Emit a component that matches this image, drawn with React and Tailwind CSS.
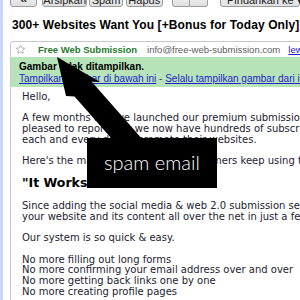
export default function App() {
  return (
    <div className="relative w-[300px] h-[300px] overflow-hidden bg-white flex">
      <div className="w-[3px] shrink-0 bg-[#c9d6f5]" />
      <div className="flex-1 min-w-0 flex flex-col font-['Liberation_Sans',Arial,sans-serif]">
        {/* toolbar */}
        <div className="h-[8px] flex items-start pl-[7px] whitespace-nowrap overflow-visible">
          <div className="w-[30px] h-[21px] -mt-[14px] border border-[#9c9c9c] rounded-[3px] bg-linear-to-b from-[#ffffff] to-[#e0e0e0] flex justify-center pt-[6px] text-[13px] leading-[11px] font-bold text-[#333]">«</div>
          <div className="ml-[5px] w-[50px] h-[21px] -mt-[14px] border border-[#9c9c9c] rounded-[3px] bg-linear-to-b from-[#ffffff] to-[#e0e0e0] flex justify-center pt-[8px] text-[11px] leading-[11px] text-[#222]">Arsipkan</div>
          <div className="ml-[2px] w-[37px] h-[21px] -mt-[14px] border border-[#9c9c9c] rounded-[3px] bg-linear-to-b from-[#ffffff] to-[#e0e0e0] flex justify-center pt-[8px] text-[11px] leading-[11px] text-[#222]">Spam</div>
          <div className="ml-[3px] w-[41px] h-[21px] -mt-[14px] border border-[#9c9c9c] rounded-[3px] bg-linear-to-b from-[#ffffff] to-[#e0e0e0] flex justify-center pt-[8px] text-[11px] leading-[11px] text-[#222]">Hapus</div>
          <div className="ml-[9px] w-[20px] h-[21px] -mt-[14px] border border-[#9c9c9c] rounded-l-[3px] bg-linear-to-b from-[#ffffff] to-[#e0e0e0] flex justify-center items-end pb-[11px]">
            <svg width="10" height="8" viewBox="0 0 10 8">
              <path d="M1 0 L9 0 L9 5 L5 7.5 L1 5 Z" fill="#f2c230" stroke="#6b5410" strokeWidth="1" />
              <path d="M3 3 L5 5 L7 3" fill="none" stroke="#3a2a00" strokeWidth="1" />
            </svg>
          </div>
          <div className="w-[20px] h-[21px] -mt-[14px] border border-l-0 border-[#9c9c9c] rounded-r-[3px] bg-linear-to-b from-[#ffffff] to-[#e0e0e0] flex justify-center items-end pb-[12px]">
            <svg width="10" height="7" viewBox="0 0 10 7">
              <rect x="0.5" y="0.5" width="9" height="6" fill="#fff" stroke="#555" strokeWidth="1" />
              <line x1="2.5" y1="3.5" x2="7.5" y2="3.5" stroke="#333" strokeWidth="1" />
            </svg>
          </div>
          <div className="ml-[12px] w-[80px] h-[21px] -mt-[14px] border border-[#9c9c9c] rounded-[3px] bg-linear-to-b from-[#ffffff] to-[#e0e0e0] flex pl-[6px] pt-[8px] text-[11px] leading-[11px] text-[#222]">Pindahkan ke ▾</div>
        </div>

        {/* subject */}
        <div className="mt-[10px] pl-[9px] text-[12px] leading-[14px] tracking-[0.1px] font-bold text-black whitespace-nowrap">
          300+ Websites Want You [+Bonus for Today Only]
        </div>

        {/* card */}
        <div className="mt-[9px] ml-[7px] flex-1 border-t border-l border-[#c8c8c8] rounded-tl-[4px] flex flex-col overflow-hidden">
          <div className="h-[15px] flex items-center whitespace-nowrap text-[9.5px] leading-[15px] pl-[4px]">
            <svg width="11" height="11" viewBox="0 0 24 24" className="shrink-0">
              <path d="M12 2.5 L14.9 8.6 L21.5 9.3 L16.5 13.8 L17.9 20.4 L12 17 L6.1 20.4 L7.5 13.8 L2.5 9.3 L9.1 8.6 Z" fill="#fff" stroke="#a8a8a8" strokeWidth="1.8" strokeLinejoin="round" />
            </svg>
            <span className="ml-[12px] font-bold text-[#1f7a2c]">Free Web Submission</span>
            <span className="ml-[10px] text-[#5c5c5c]">info@free-web-submission.com</span>
            <span className="ml-[8px] text-[#2323cc] underline">lewat</span>
          </div>

          <div className="bg-[#b6e4b8] pl-[8px] pt-[4px] pb-[2px] text-[10px] leading-[12px] whitespace-nowrap">
            <div className="font-bold text-black">Gambar tidak ditampilkan.</div>
            <div>
              <span className="text-[#2323cc] underline">Tampilkan gambar di bawah ini</span>
              <span className="text-[#444]"> - </span>
              <span className="text-[#2323cc] underline">Selalu tampilkan gambar dari info@free-web-submission.com</span>
            </div>
          </div>

          <div className="pl-[11px] pt-[4.5px] font-['DejaVu_Sans',Verdana,sans-serif] text-[10px] leading-[10.75px] text-[#241c30] whitespace-nowrap">
            <p className="mb-[10.75px]">Hello,</p>
            <p className="mb-[10.75px]">
              A few months ago we launched our premium submission service and we are<br />
              pleased to report that we now have hundreds of subscribers using it<br />
              each and every day to promote their websites.
            </p>
            <p>Here's the main reason why our customers keep using the service...</p>
            <p className="mt-[8px] mb-[11px] font-bold text-[12.5px] leading-[15px] text-black">"It Works"</p>
            <p className="mb-[10.75px]">
              Since adding the social media &amp; web 2.0 submission service we have been able to promote<br />
              your website and its content all over the net in just a few minutes.
            </p>
            <p className="mb-[10.75px]">Our system is so quick &amp; easy.</p>
            <p>
              No more filling out long forms<br />
              No more confirming your email address over and over<br />
              No more getting back links one by one<br />
              No more creating profile pages
            </p>
          </div>
        </div>
      </div>

      {/* overlay arrow */}
      <svg className="absolute left-0 top-0 pointer-events-none" width="300" height="300" viewBox="0 0 300 300">
        <polygon
          points="57,57 100,82 91.5,81.5 151,149 134,164 74.5,96.5 66,96"
          fill="#000"
        />
      </svg>
      <div className="absolute left-[87px] top-[138px] w-[130px] h-[50px] bg-black flex items-center justify-center">
        <span className="font-['Lato_Light','Lato',sans-serif] font-light text-[20px] leading-[20px] text-white -mt-[2px]">spam email</span>
      </div>
    </div>
  );
}
